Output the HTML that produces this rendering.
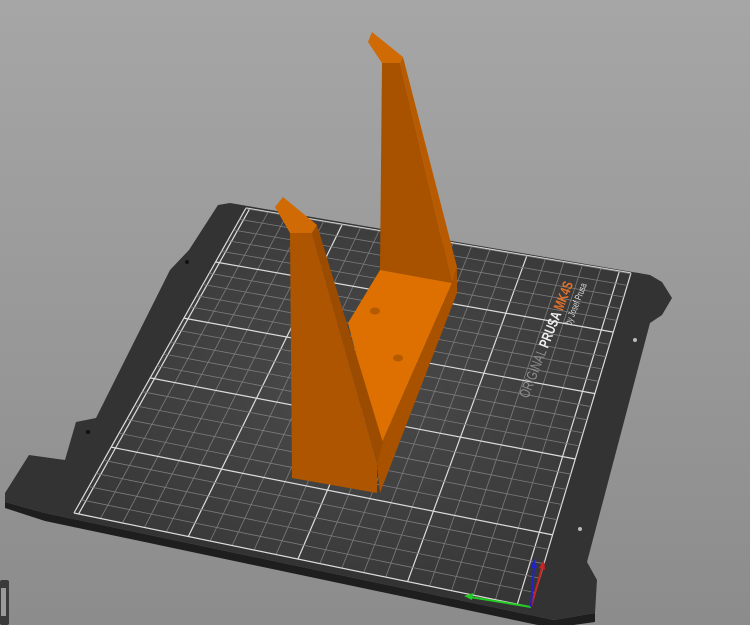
<!DOCTYPE html>
<html><head><meta charset="utf-8"><style>
html,body{margin:0;padding:0;width:750px;height:625px;overflow:hidden;background:#9c9c9c}
svg{display:block}
</style></head><body>
<svg id="s" width="750" height="625" viewBox="0 0 750 625" xmlns="http://www.w3.org/2000/svg">
<defs>
<linearGradient id="bg" x1="0" y1="0" x2="0" y2="1"><stop offset="0" stop-color="#a6a6a6"/><stop offset="1" stop-color="#8c8c8c"/></linearGradient>
<radialGradient id="pg" cx="0.5" cy="0.45" r="0.6"><stop offset="0" stop-color="#4a4a4a"/><stop offset="1" stop-color="#363636"/></radialGradient>
</defs>
<rect width="750" height="625" fill="url(#bg)"/>
<polygon points="45,513 554,620 595,613 595,622 552,628 45,521 5,508 5,502" fill="#1e1e1e"/>
<polygon points="230,203 650,275 662,282 672,298 662,315 650,323 587,562 597,580 595,613 554,620 45,513 5,502 5,493 29,455 65,460 76,422 96,418 170,270 189,250 218,205" fill="#333333"/>
<polygon points="246,208 631,273 531,607 74,513" fill="url(#pg)"/>
<g id="grid"></g>
<circle cx="635" cy="340" r="2" fill="#bbb"/><circle cx="580" cy="529" r="2" fill="#bbb"/>
<circle cx="187" cy="262" r="2" fill="#111"/><circle cx="88" cy="432" r="2" fill="#111"/>
<g transform="translate(528,399) rotate(-68.5)">
<text x="0" y="0" font-family="Liberation Sans, sans-serif" font-size="14.5" font-weight="bold" textLength="124" lengthAdjust="spacingAndGlyphs"><tspan fill="#8e8e8e" font-weight="normal">ORIGINAL </tspan><tspan fill="#eeeeee">PRUSA </tspan><tspan fill="#e0722a">MK4S</tspan></text>
<text x="84" y="13" font-family="Liberation Sans, sans-serif" font-size="10" fill="#dddddd" textLength="44" lengthAdjust="spacingAndGlyphs">by Josef Prusa</text>
</g>
<line x1="531" y1="607" x2="470" y2="597" stroke="#22cc22" stroke-width="2"/>
<polygon points="464,596 473,593 472,600" fill="#22cc22"/>
<line x1="531" y1="607" x2="542" y2="568" stroke="#cc2222" stroke-width="2"/>
<polygon points="544,560 545,570 539,568" fill="#cc2222"/>
<line x1="531" y1="607" x2="534" y2="566" stroke="#2222cc" stroke-width="2"/>
<polygon points="534,558 537,568 531,568" fill="#2222cc"/>
<polygon points="368,42 372,32 403,57 400,63 382,63" fill="#d06a05"/>
<polygon points="382,63 400,63 452,283 380,270" fill="#a85200"/>
<polygon points="400,63 403,57 457,267 452,283" fill="#b85b00"/>
<polygon points="380,270 452,283 380,447 348,323" fill="#dd7000"/>
<polygon points="452,283 457,267 457,293 380,493 377,463 380,447" fill="#a85200"/>
<ellipse cx="375" cy="311" rx="5" ry="3.5" fill="#b45a00"/>
<ellipse cx="398" cy="358" rx="5" ry="3.5" fill="#b45a00"/>
<polygon points="275,207 283,197 317,225 312,233 290,233" fill="#d06a05"/>
<polygon points="290,233 312,233 377,463 377,493 292,478" fill="#ad5500"/>
<polygon points="312,233 317,225 383,443 377,463" fill="#9c4c00"/>
<rect x="0" y="580" width="9" height="45" rx="2" fill="#3a3a3a"/>
<rect x="1" y="588" width="5" height="28" fill="#9a9a9a"/>
</svg>
<script>
(function(){
var TL=[246,208],TR=[631,273],BL=[74,513],BR=[531,607];
function P(u,v){return [TL[0]*(1-u)*(1-v)+TR[0]*u*(1-v)+BL[0]*(1-u)*v+BR[0]*u*v, TL[1]*(1-u)*(1-v)+TR[1]*u*(1-v)+BL[1]*(1-u)*v+BR[1]*u*v];}
var g=document.getElementById('grid'),h='';
function ln(a,b,m){h+='<line x1="'+a[0].toFixed(1)+'" y1="'+a[1].toFixed(1)+'" x2="'+b[0].toFixed(1)+'" y2="'+b[1].toFixed(1)+'" stroke="'+(m?'#dcdcdc':'#7c7c7c')+'" stroke-width="'+(m?1.2:0.8)+'"/>';}
ln(P(0,0),P(0,1),true);ln(P(1,0),P(1,1),true);
for(var k=0;k<=20;k++){var u=0.01+0.048*k;ln(P(u,0),P(u,1),k%5==0);}
var maj=[0.177,0.361,0.557,0.784,1];
ln(P(0,0),P(1,0),true);
for(var k=1;k<=5;k++){var v=0.177-0.035*k;if(v>0.001)ln(P(0,v),P(1,v),false);}
for(var m=0;m<maj.length;m++){ln(P(0,maj[m]),P(1,maj[m]),true);
 if(m<maj.length-1){var d=(maj[m+1]-maj[m])/5;for(var k=1;k<5;k++){var v=maj[m]+d*k;ln(P(0,v),P(1,v),false);}}}
g.innerHTML=h;
})();
</script>
</body></html>
